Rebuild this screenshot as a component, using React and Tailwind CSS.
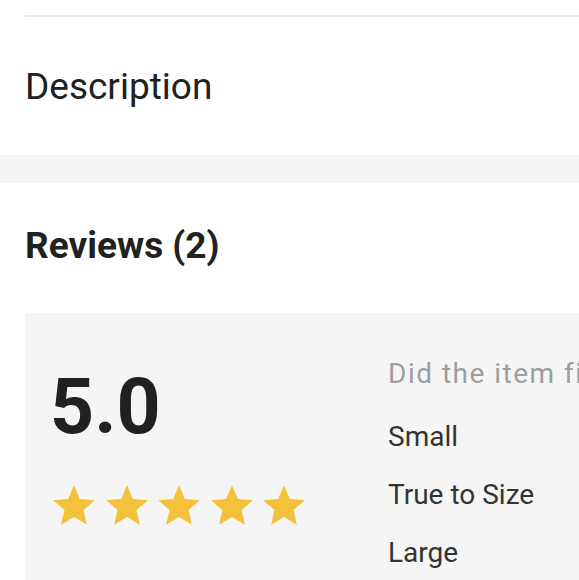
import React from 'react';

const Star = () => (
  <svg width="50" height="50" viewBox="0 0 24 24" className="shrink-0">
    <path
      fill="#f4c13a"
      d="M12 17.27L18.18 21l-1.64-7.03L22 9.24l-7.19-.61L12 2 9.19 8.63 2 9.24l5.46 4.73L5.82 21z"
    />
  </svg>
);

const fitOptions = ['Small', 'True to Size', 'Large'];

const App = () => {
  return (
    <div className="h-[580px] w-full overflow-hidden bg-white text-[#212121] font-['Roboto',sans-serif]">
      {/* top divider */}
      <div className="pt-[15px] pl-[25px]">
        <div className="h-[2px] bg-[#ebebeb]" />
      </div>

      <div className="pl-[25px] pt-[49px] pb-[47px]">
        <h2 className="text-[37px] leading-[42px] font-normal">Description</h2>
      </div>

      <div className="h-[28px] bg-[#f5f5f5]" />

      <div className="pl-[25px] pt-[42px] pb-[46px]">
        <h2 className="text-[37px] leading-[42px] font-bold">Reviews (2)</h2>
      </div>

      <div className="ml-[25px] flex bg-[#f5f5f5] overflow-hidden h-[300px]">
        <div className="w-[363px] shrink-0 pl-[25px] pt-[54px]">
          <div className="text-[77px] leading-[80px] font-bold">5.0</div>
          <div className="flex gap-[2.5px] mt-[34px] -ml-[1px]">
            <Star />
            <Star />
            <Star />
            <Star />
            <Star />
          </div>
        </div>
        <div className="flex-1 pt-[44px] whitespace-nowrap text-[28px]">
          <p className="leading-[33px] text-[#9e9e9e] tracking-[1.5px] mb-[18px]">Did the item fit well?</p>
          {fitOptions.map((opt) => (
            <p key={opt} className="leading-[58px] text-[#333333]">
              {opt}
            </p>
          ))}
        </div>
      </div>
    </div>
  );
};

export default App;
